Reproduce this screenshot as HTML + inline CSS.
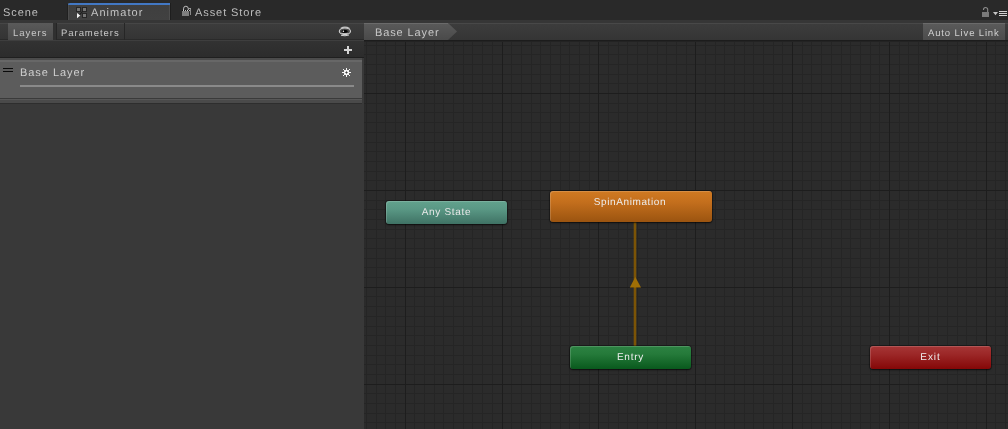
<!DOCTYPE html>
<html><head><meta charset="utf-8">
<style>
*{margin:0;padding:0;box-sizing:border-box}
html,body{width:1008px;height:429px;overflow:hidden;background:#2b2b2b;font-family:"Liberation Sans",sans-serif}
.a{position:absolute}
.t{position:absolute;white-space:nowrap;line-height:1;will-change:transform;text-rendering:geometricPrecision}
</style></head><body>
<div class="a" style="left:0;top:0;width:1008px;height:429px;overflow:hidden">

<!-- top tab bar -->
<div class="a" style="left:0;top:0;width:1008px;height:20px;background:#292929"></div>
<div class="t" style="left:3px;top:8px;font-size:11px;letter-spacing:0.95px;color:#bdbdbd">Scene</div>
<!-- animator tab -->
<div class="a" style="left:68px;top:3px;width:102px;height:17px;background:linear-gradient(#3f3f3f,#414141);border-left:1px solid #4c4c4c;border-right:1px solid #4e4e4e"></div>
<div class="a" style="left:68px;top:3px;width:102px;height:2px;background:#4278c4;border-top-left-radius:2px"></div><div class="a" style="left:67px;top:4px;width:1px;height:16px;background:#202020"></div>
<div class="a" style="left:170px;top:3px;width:1px;height:17px;background:#1e1e1e"></div>
<svg class="a" style="left:0;top:0" width="100" height="20" viewBox="0 0 100 20">
 <g shape-rendering="crispEdges">
 <rect x="76" y="7" width="5" height="5" fill="#272727"/><rect x="77" y="8" width="3" height="3" fill="#767676"/>
 <rect x="82" y="7" width="5" height="5" fill="#272727"/><rect x="83" y="8" width="3" height="3" fill="#767676"/>
 <rect x="82" y="13" width="5" height="5" fill="#272727"/><rect x="83" y="14" width="3" height="3" fill="#767676"/>
 </g>
 <path d="M82.5 11.5 L79.5 14.8" stroke="#1c1c1c" stroke-width="1.1"/>
 <path d="M77 13 L77 18.3 L80.3 15.6 Z" fill="#f4f4f4"/>
</svg>
<div class="t" style="left:91px;top:8px;font-size:11px;letter-spacing:1.05px;color:#c4c4c4">Animator</div>
<!-- asset store -->
<svg class="a" style="left:0;top:0" width="200" height="20" viewBox="0 0 200 20">
 <path d="M183.5 10 V8.8 A2.4 2.6 0 0 1 188.3 8.8 V10" fill="none" stroke="#bdbdbd" stroke-width="1"/>
 <g shape-rendering="crispEdges">
 <rect x="182" y="11" width="7" height="5" fill="#7e7e7e"/>
 <rect x="182" y="10" width="1" height="1" fill="#111"/><rect x="183" y="10" width="1" height="1" fill="#cfcfcf"/>
 <rect x="184" y="10" width="1" height="1" fill="#111"/><rect x="185" y="10" width="1" height="1" fill="#bbbbbb"/>
 <rect x="186" y="10" width="1" height="1" fill="#111"/><rect x="187" y="10" width="1" height="1" fill="#cfcfcf"/>
 <rect x="188" y="10" width="1" height="1" fill="#111"/><rect x="189" y="10" width="1" height="1" fill="#bbbbbb"/>
 <rect x="190" y="9" width="1" height="6" fill="#8a8a8a"/>
 <rect x="188" y="8" width="3" height="1" fill="#9a9a9a"/>
 </g>
</svg>
<div class="t" style="left:195px;top:8px;font-size:11px;letter-spacing:0.92px;color:#bdbdbd">Asset Store</div>
<!-- lock + menu -->
<svg class="a" style="left:0;top:0" width="1008" height="20" viewBox="0 0 1008 20">
 <path d="M983.5 10 V9.6 A2.1 2.1 0 0 1 987.7 9.6 V12" fill="none" stroke="#8c8c8c" stroke-width="1.1"/>
 <g shape-rendering="crispEdges">
 <rect x="982" y="12" width="7" height="5" fill="#7a7a7a"/>
 <rect x="999" y="11" width="8" height="1" fill="#d2d2d2"/>
 <rect x="999" y="13" width="8" height="1" fill="#d2d2d2"/>
 <rect x="999" y="15" width="8" height="1" fill="#d2d2d2"/>
 </g>
 <path d="M993 12 H998 L995.5 15.2 Z" fill="#c4c4c4"/>
</svg>

<!-- row 2 toolbar -->
<div class="a" style="left:0;top:20px;width:1008px;height:3px;background:#363636"></div>
<div class="a" style="left:0;top:23px;width:1008px;height:1px;background:#484848"></div>
<div class="a" style="left:0;top:24px;width:1008px;height:16px;background:linear-gradient(#3c3c3c,#353535)"></div>

<!-- left panel -->
<div class="a" style="left:0;top:40px;width:364px;height:389px;background:#393939"></div>
<div class="a" style="left:0;top:23px;width:364px;height:1px;background:#464646"></div>
<div class="a" style="left:0;top:24px;width:364px;height:15px;background:linear-gradient(#3c3c3c,#343434)"></div>
<div class="a" style="left:0;top:39px;width:364px;height:1px;background:#2a2a2a"></div>
<div class="a" style="left:8px;top:23px;width:45px;height:17px;background:linear-gradient(#5a5a5a,#4a4a4a)"></div><div class="a" style="left:53px;top:23px;width:3px;height:17px;background:#303030"></div>
<div class="t" style="left:13px;top:29px;font-size:9.5px;letter-spacing:1px;color:#c8c8c8">Layers</div>
<div class="a" style="left:56px;top:23px;width:1px;height:17px;background:#262626"></div>
<div class="a" style="left:124px;top:23px;width:1px;height:17px;background:#262626"></div>
<div class="t" style="left:61px;top:29px;font-size:9.5px;letter-spacing:0.95px;color:#c8c8c8">Parameters</div>
<svg class="a" style="left:0;top:0" width="360" height="40" viewBox="0 0 360 40">
 <path d="M340.8 28.2 Q345 26 349.6 28.4" fill="none" stroke="#c4c4c4" stroke-width="1.1"/>
 <ellipse cx="344.9" cy="31.3" rx="5.6" ry="3.3" fill="#4a4a4a" stroke="#d2d2d2" stroke-width="1.1"/>
 <ellipse cx="344.6" cy="31.3" rx="3.1" ry="1.6" fill="#030303"/>
 <path d="M341.5 33.6 H347.8" stroke="#cfcfcf" stroke-width="0.9"/>
 <path d="M341 35.3 Q345 36.4 349 35" fill="none" stroke="#d0d0d0" stroke-width="1"/>
 <circle cx="343.4" cy="31.2" r="0.75" fill="#f4f4f4"/>
</svg>
<!-- row 3 -->
<div class="a" style="left:0;top:40px;width:364px;height:1px;background:#3e3e3e"></div>
<div class="a" style="left:0;top:41px;width:364px;height:16px;background:linear-gradient(#323232,#2c2c2c)"></div>
<div class="a" style="left:0;top:57px;width:364px;height:1px;background:#1f1f1f"></div>
<svg class="a" style="left:0;top:0" width="360" height="60" viewBox="0 0 360 60" shape-rendering="crispEdges">
 <rect x="344" y="49" width="8" height="2" fill="#d4d4d4"/>
 <rect x="347" y="46" width="2" height="8" fill="#d4d4d4"/>
</svg>
<!-- layer item -->
<div class="a" style="left:0;top:58px;width:362px;height:40px;background:#5c5c5c"></div>
<div class="a" style="left:0;top:58px;width:362px;height:2px;background:#4b4b4b"></div>
<div class="a" style="left:0;top:60px;width:362px;height:2px;background:#676767"></div>
<div class="a" style="left:3px;top:68px;width:10px;height:1px;background:#0a0a0a"></div>
<div class="a" style="left:3px;top:71px;width:10px;height:1px;background:#0a0a0a"></div>
<div class="t" style="left:19.5px;top:68px;font-size:11px;letter-spacing:0.95px;color:#cfcfcf">Base Layer</div>
<div class="a" style="left:20px;top:85px;width:334px;height:2px;background:#8a8a8a"></div>
<svg class="a" style="left:0;top:0" width="360" height="80" viewBox="0 0 360 80" shape-rendering="crispEdges"><rect x="346" y="68" width="1" height="1" fill="#f4f4f4"/><rect x="346" y="69" width="1" height="1" fill="#f4f4f4"/><rect x="343" y="69" width="1" height="1" fill="#f4f4f4"/><rect x="349" y="69" width="1" height="1" fill="#f4f4f4"/><rect x="343" y="75" width="1" height="1" fill="#f4f4f4"/><rect x="349" y="75" width="1" height="1" fill="#f4f4f4"/><rect x="346" y="75" width="1" height="1" fill="#f4f4f4"/><rect x="346" y="76" width="1" height="1" fill="#f4f4f4"/><rect x="342" y="72" width="1" height="1" fill="#f4f4f4"/><rect x="343" y="72" width="1" height="1" fill="#f4f4f4"/><rect x="349" y="72" width="1" height="1" fill="#f4f4f4"/><rect x="350" y="72" width="1" height="1" fill="#f4f4f4"/><rect x="344" y="70" width="5" height="5" fill="#f4f4f4"/><rect x="345" y="72" width="3" height="1" fill="#8a8a8a"/><rect x="346" y="71" width="1" height="3" fill="#8a8a8a"/><rect x="346" y="72" width="1" height="1" fill="#3a3a3a"/></svg>
<div class="a" style="left:0;top:98px;width:362px;height:1px;background:#3a3a3a"></div>
<div class="a" style="left:0;top:99px;width:362px;height:1px;background:#575757"></div>
<div class="a" style="left:0;top:100px;width:362px;height:3px;background:#4a4a4a"></div>
<div class="a" style="left:0;top:103px;width:362px;height:1px;background:#2e2e2e"></div>


<!-- graph -->
<svg class="a" style="left:0;top:0" width="1008" height="429" viewBox="0 0 1008 429" shape-rendering="crispEdges">
<rect x="364" y="40" width="644" height="389" fill="#2b2b2b"/>
<rect x="366" y="40" width="1" height="389" fill="#252525"/>
<rect x="376" y="40" width="1" height="389" fill="#252525"/>
<rect x="385" y="40" width="1" height="389" fill="#252525"/>
<rect x="395" y="40" width="1" height="389" fill="#252525"/>
<rect x="414" y="40" width="1" height="389" fill="#252525"/>
<rect x="424" y="40" width="1" height="389" fill="#252525"/>
<rect x="434" y="40" width="1" height="389" fill="#252525"/>
<rect x="443" y="40" width="1" height="389" fill="#252525"/>
<rect x="453" y="40" width="1" height="389" fill="#252525"/>
<rect x="463" y="40" width="1" height="389" fill="#252525"/>
<rect x="472" y="40" width="1" height="389" fill="#252525"/>
<rect x="482" y="40" width="1" height="389" fill="#252525"/>
<rect x="492" y="40" width="1" height="389" fill="#252525"/>
<rect x="511" y="40" width="1" height="389" fill="#252525"/>
<rect x="521" y="40" width="1" height="389" fill="#252525"/>
<rect x="531" y="40" width="1" height="389" fill="#252525"/>
<rect x="540" y="40" width="1" height="389" fill="#252525"/>
<rect x="550" y="40" width="1" height="389" fill="#252525"/>
<rect x="560" y="40" width="1" height="389" fill="#252525"/>
<rect x="569" y="40" width="1" height="389" fill="#252525"/>
<rect x="579" y="40" width="1" height="389" fill="#252525"/>
<rect x="589" y="40" width="1" height="389" fill="#252525"/>
<rect x="608" y="40" width="1" height="389" fill="#252525"/>
<rect x="618" y="40" width="1" height="389" fill="#252525"/>
<rect x="627" y="40" width="1" height="389" fill="#252525"/>
<rect x="637" y="40" width="1" height="389" fill="#252525"/>
<rect x="647" y="40" width="1" height="389" fill="#252525"/>
<rect x="657" y="40" width="1" height="389" fill="#252525"/>
<rect x="666" y="40" width="1" height="389" fill="#252525"/>
<rect x="676" y="40" width="1" height="389" fill="#252525"/>
<rect x="686" y="40" width="1" height="389" fill="#252525"/>
<rect x="705" y="40" width="1" height="389" fill="#252525"/>
<rect x="715" y="40" width="1" height="389" fill="#252525"/>
<rect x="724" y="40" width="1" height="389" fill="#252525"/>
<rect x="734" y="40" width="1" height="389" fill="#252525"/>
<rect x="744" y="40" width="1" height="389" fill="#252525"/>
<rect x="753" y="40" width="1" height="389" fill="#252525"/>
<rect x="763" y="40" width="1" height="389" fill="#252525"/>
<rect x="773" y="40" width="1" height="389" fill="#252525"/>
<rect x="782" y="40" width="1" height="389" fill="#252525"/>
<rect x="802" y="40" width="1" height="389" fill="#252525"/>
<rect x="811" y="40" width="1" height="389" fill="#252525"/>
<rect x="821" y="40" width="1" height="389" fill="#252525"/>
<rect x="831" y="40" width="1" height="389" fill="#252525"/>
<rect x="841" y="40" width="1" height="389" fill="#252525"/>
<rect x="850" y="40" width="1" height="389" fill="#252525"/>
<rect x="860" y="40" width="1" height="389" fill="#252525"/>
<rect x="870" y="40" width="1" height="389" fill="#252525"/>
<rect x="879" y="40" width="1" height="389" fill="#252525"/>
<rect x="899" y="40" width="1" height="389" fill="#252525"/>
<rect x="908" y="40" width="1" height="389" fill="#252525"/>
<rect x="918" y="40" width="1" height="389" fill="#252525"/>
<rect x="928" y="40" width="1" height="389" fill="#252525"/>
<rect x="937" y="40" width="1" height="389" fill="#252525"/>
<rect x="947" y="40" width="1" height="389" fill="#252525"/>
<rect x="957" y="40" width="1" height="389" fill="#252525"/>
<rect x="966" y="40" width="1" height="389" fill="#252525"/>
<rect x="976" y="40" width="1" height="389" fill="#252525"/>
<rect x="995" y="40" width="1" height="389" fill="#252525"/>
<rect x="1005" y="40" width="1" height="389" fill="#252525"/>
<rect x="364" y="45" width="644" height="1" fill="#252525"/>
<rect x="364" y="54" width="644" height="1" fill="#252525"/>
<rect x="364" y="64" width="644" height="1" fill="#252525"/>
<rect x="364" y="74" width="644" height="1" fill="#252525"/>
<rect x="364" y="83" width="644" height="1" fill="#252525"/>
<rect x="364" y="103" width="644" height="1" fill="#252525"/>
<rect x="364" y="112" width="644" height="1" fill="#252525"/>
<rect x="364" y="122" width="644" height="1" fill="#252525"/>
<rect x="364" y="132" width="644" height="1" fill="#252525"/>
<rect x="364" y="142" width="644" height="1" fill="#252525"/>
<rect x="364" y="151" width="644" height="1" fill="#252525"/>
<rect x="364" y="161" width="644" height="1" fill="#252525"/>
<rect x="364" y="171" width="644" height="1" fill="#252525"/>
<rect x="364" y="180" width="644" height="1" fill="#252525"/>
<rect x="364" y="200" width="644" height="1" fill="#252525"/>
<rect x="364" y="209" width="644" height="1" fill="#252525"/>
<rect x="364" y="219" width="644" height="1" fill="#252525"/>
<rect x="364" y="229" width="644" height="1" fill="#252525"/>
<rect x="364" y="238" width="644" height="1" fill="#252525"/>
<rect x="364" y="248" width="644" height="1" fill="#252525"/>
<rect x="364" y="258" width="644" height="1" fill="#252525"/>
<rect x="364" y="267" width="644" height="1" fill="#252525"/>
<rect x="364" y="277" width="644" height="1" fill="#252525"/>
<rect x="364" y="296" width="644" height="1" fill="#252525"/>
<rect x="364" y="306" width="644" height="1" fill="#252525"/>
<rect x="364" y="316" width="644" height="1" fill="#252525"/>
<rect x="364" y="326" width="644" height="1" fill="#252525"/>
<rect x="364" y="335" width="644" height="1" fill="#252525"/>
<rect x="364" y="345" width="644" height="1" fill="#252525"/>
<rect x="364" y="355" width="644" height="1" fill="#252525"/>
<rect x="364" y="364" width="644" height="1" fill="#252525"/>
<rect x="364" y="374" width="644" height="1" fill="#252525"/>
<rect x="364" y="393" width="644" height="1" fill="#252525"/>
<rect x="364" y="403" width="644" height="1" fill="#252525"/>
<rect x="364" y="413" width="644" height="1" fill="#252525"/>
<rect x="364" y="422" width="644" height="1" fill="#252525"/>
<rect x="405" y="40" width="1" height="389" fill="#1d1d1d"/>
<rect x="502" y="40" width="1" height="389" fill="#1d1d1d"/>
<rect x="598" y="40" width="1" height="389" fill="#1d1d1d"/>
<rect x="695" y="40" width="1" height="389" fill="#1d1d1d"/>
<rect x="792" y="40" width="1" height="389" fill="#1d1d1d"/>
<rect x="889" y="40" width="1" height="389" fill="#1d1d1d"/>
<rect x="986" y="40" width="1" height="389" fill="#1d1d1d"/>
<rect x="364" y="93" width="644" height="1" fill="#1d1d1d"/>
<rect x="364" y="190" width="644" height="1" fill="#1d1d1d"/>
<rect x="364" y="287" width="644" height="1" fill="#1d1d1d"/>
<rect x="364" y="384" width="644" height="1" fill="#1d1d1d"/>
<rect x="364" y="40" width="644" height="1" fill="#1c1c1c"/>
<rect x="364" y="41" width="644" height="1" fill="#232323"/>
</svg>

<!-- breadcrumb -->
<svg class="a" style="left:364px;top:23px" width="94" height="17" viewBox="0 0 94 17">
 <defs><linearGradient id="bc" x1="0" y1="0" x2="0" y2="1"><stop offset="0" stop-color="#5a5a5a"/><stop offset="1" stop-color="#4a4a4a"/></linearGradient></defs>
 <path d="M0 0 H84 L93 8.5 L84 17 H0 Z" fill="url(#bc)"/>
 <path d="M0 0.5 H84" stroke="#6a6a6a" stroke-width="1"/>
</svg>
<div class="t" style="left:375px;top:28px;font-size:11px;letter-spacing:0.88px;color:#c8c8c8">Base Layer</div>
<!-- auto live link -->
<div class="a" style="left:923px;top:23px;width:82px;height:17px;background:linear-gradient(#5a5a5a,#4c4c4c);border-top:1px solid #6a6a6a"></div>
<div class="t" style="left:928px;top:29px;font-size:9.5px;letter-spacing:0.85px;color:#d0d0d0">Auto Live Link</div>

<!-- transition -->
<svg class="a" style="left:0;top:0" width="1008" height="429" viewBox="0 0 1008 429">
 <rect x="633.7" y="222" width="2.6" height="124" fill="#7c5406"/>
 <path d="M635.3 277 L641 287.5 L629.8 287.5 Z" fill="#a06f06"/>
</svg>

<!-- nodes -->
<div class="a" style="left:386px;top:201px;width:121px;height:23px;border-radius:3px;background:linear-gradient(#62a28d,#5a9885 35%,#3f7264);box-shadow:inset 1px 1px 0 rgba(255,255,255,.16),0 0 0 1px rgba(0,0,0,.28),0 1px 2px rgba(0,0,0,.55)"></div>
<div class="t" style="left:386px;top:208px;width:121px;text-align:center;font-size:10px;letter-spacing:0.7px;color:#e8e8e8">Any State</div>

<div class="a" style="left:550px;top:191px;width:162px;height:31px;border-radius:3px;background:linear-gradient(#d07a22,#c46f1d 35%,#9b5410);box-shadow:inset 1px 1px 0 rgba(255,255,255,.16),0 0 0 1px rgba(0,0,0,.28),0 1px 2px rgba(0,0,0,.55)"></div>
<div class="t" style="left:549px;top:198px;width:162px;text-align:center;font-size:10px;letter-spacing:0.6px;color:#eeeeee">SpinAnimation</div>

<div class="a" style="left:570px;top:346px;width:121px;height:23px;border-radius:3px;background:linear-gradient(#2c8242,#257a3a 35%,#09591d);box-shadow:inset 1px 1px 0 rgba(255,255,255,.16),0 0 0 1px rgba(0,0,0,.28),0 1px 2px rgba(0,0,0,.55)"></div>
<div class="t" style="left:569.5px;top:353px;width:121px;text-align:center;font-size:10px;letter-spacing:0.75px;color:#eeeeee">Entry</div>

<div class="a" style="left:870px;top:346px;width:121px;height:23px;border-radius:3px;background:linear-gradient(#a63636,#9c2828 35%,#850707);box-shadow:inset 1px 1px 0 rgba(255,255,255,.16),0 0 0 1px rgba(0,0,0,.28),0 1px 2px rgba(0,0,0,.55)"></div>
<div class="t" style="left:869.5px;top:353px;width:121px;text-align:center;font-size:10px;letter-spacing:0.9px;color:#eeeeee">Exit</div>

</div>
</body></html>
